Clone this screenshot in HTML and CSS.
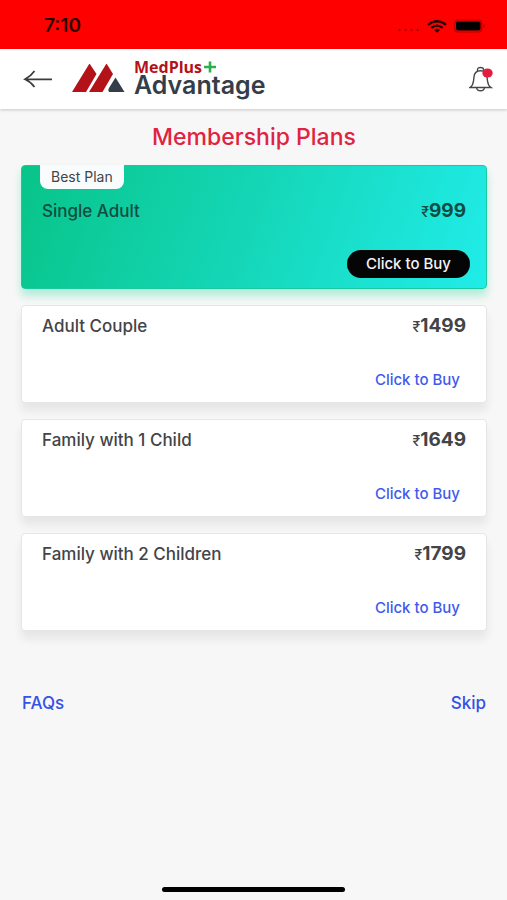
FILE: index.html
```html
<!DOCTYPE html>
<html lang="en">
<head>
<meta charset="utf-8">
<meta name="viewport" content="width=device-width, initial-scale=1">
<title>Membership Plans</title>
<link rel="stylesheet" href="styles.css">
</head>
<body>
<div class="status">
  <time class="clock">7:10</time>
  <div class="indicators">
    <svg class="signal" width="22" height="4" viewBox="0 0 22 4" aria-hidden="true"><g fill="#a80000"><circle cx="1.500" cy="2" r="1.200"/><circle cx="7.500" cy="2" r="1.200"/><circle cx="13.500" cy="2" r="1.200"/><circle cx="19.500" cy="2" r="1.200"/></g></svg>
    <svg width="20" height="13" viewBox="0 0 20 13" aria-hidden="true"><g fill="none" stroke="#250000" stroke-width="2.300"><path d="M1 4.800Q10-2.200 19 4.800"/><path d="M4.300 7.900Q10 3.300 15.700 7.900"/></g><path d="M7 10Q10 7.600 13 10L10 12.700Z" fill="#250000"/></svg>
    <svg width="32" height="14" viewBox="0 0 32 14" aria-hidden="true"><rect x=".700" y="1" width="27" height="12" rx="3.500" fill="none" stroke="#b80000" stroke-width="1.200"/><rect x="2" y="2.500" width="24.500" height="9" rx="1.800" fill="#000"/><path d="M29.500 5Q32 7 29.500 9Z" fill="#a00000"/></svg>
  </div>
</div>
<header class="topbar">
  <button class="icon-button" type="button" aria-label="Back">
    <svg width="30" height="20" viewBox="0 0 30 20" fill="none" stroke="#3c3c3f" stroke-width="1.700"><path d="M29 10.300H2M11.500 2Q8 7 2 10.300Q8 13 11.500 18"/></svg>
  </button>
  <a class="brand" href="#">
    <svg width="53" height="30" viewBox="0 0 53 30" aria-hidden="true"><path d="M0 28L17.500 -.500L24.500 10L14 28Z" fill="#b41219"/><path d="M17 28L34.500 -.500L41 10L30.500 28Z" fill="#b41219"/><path d="M43.500 13.500L52.500 28H37Q35.500 26 37 24Z" fill="#343d48"/></svg>
    <span class="brand-text">
      <span class="brand-top">MedPlus<svg width="12" height="12" viewBox="0 0 12 12" aria-hidden="true"><path d="M6 .500V11.500M0 6H12" stroke="#2bb04a" stroke-width="2.600"/></svg></span>
      <span class="brand-name">Advantage</span>
    </span>
  </a>
  <button class="icon-button bell" type="button" aria-label="Notifications">
    <svg width="24" height="26" viewBox="0 0 24 26"><g fill="none" stroke="#45464a" stroke-width="1.400"><path d="M8.500 5V3.500Q8.500 1.500 11.500 1.500Q14.500 1.500 14.500 3.500V5"/><path d="M1 21.500Q4 19.500 4.500 15L5 11Q5.500 4.800 11.500 4.800Q17.500 4.800 18 11L18.500 15Q19 19.500 22 21.500Z"/><path d="M7.500 21.500Q8 24.800 11.500 24.800Q15 24.800 15.500 21.500"/></g><ellipse cx="18.500" cy="7" rx="5.200" ry="4.600" fill="#e31b3d"/></svg>
  </button>
</header>
<main class="content">
  <h1>Membership Plans</h1>
  <section class="plan best">
    <span class="tag">Best Plan</span>
    <div class="plan-row"><h2>Single Adult</h2><p class="price"><span class="rupee">₹</span>999</p></div>
    <button class="buy" type="button">Click to Buy</button>
  </section>
  <section class="plan">
    <div class="plan-row"><h2>Adult Couple</h2><p class="price"><span class="rupee">₹</span>1499</p></div>
    <button class="buy" type="button">Click to Buy</button>
  </section>
  <section class="plan">
    <div class="plan-row"><h2>Family with 1 Child</h2><p class="price"><span class="rupee">₹</span>1649</p></div>
    <button class="buy" type="button">Click to Buy</button>
  </section>
  <section class="plan">
    <div class="plan-row"><h2>Family with 2 Children</h2><p class="price"><span class="rupee">₹</span>1799</p></div>
    <button class="buy" type="button">Click to Buy</button>
  </section>
  <nav class="links"><a href="#">FAQs</a><a href="#">Skip</a></nav>
</main>
<div class="home-bar"></div>
</body>
</html>
```
FILE: styles.css
```css
* { box-sizing: border-box; }
body {
  margin: 0;
  min-height: 100vh;
  display: flex;
  flex-direction: column;
  background: #f7f7f7;
  color: #434448;
  font-family: Inter, "Liberation Sans", sans-serif;
}
h1, h2, p { margin: 0; }
a { color: inherit; text-decoration: none; }
svg { display: block; flex: none; }
button { font: inherit; color: inherit; border: 0; background: none; padding: 0; cursor: pointer; }
.status {
  display: flex;
  justify-content: space-between;
  align-items: center;
  padding: 14px 21px 11px 44px;
  background: #ff0000;
  color: #300000;
}
.clock { font-size: 19px; line-height: 24px; font-weight: 600; }
.indicators { display: flex; align-items: center; gap: 7px; }
.signal { margin-top: 8px; }
.topbar {
  display: flex;
  align-items: center;
  height: 60px;
  padding: 0 14px 0 23px;
  background: #fff;
  box-shadow: 0 1px 3px rgba(0, 0, 0, .2);
}
.brand { display: flex; align-items: center; gap: 9px; margin-left: 19px; }
.brand-text { display: flex; flex-direction: column; }
.brand-top {
  display: flex;
  align-items: center;
  gap: 2px;
  color: #b41219;
  font: 700 16px/16px "Open Sans", sans-serif;
}
.brand-name { color: #343d48; font: 600 25px/20px Inter, sans-serif; padding-bottom: 4px; }
.bell { margin-left: auto; }
.content { padding: 14px 20px 0 21px; }
h1 {
  color: #e0243f;
  font-size: 23px;
  line-height: 28px;
  font-weight: 500;
  text-align: center;
}
.plan {
  position: relative;
  display: flex;
  flex-direction: column;
  justify-content: space-between;
  align-items: flex-end;
  min-height: 98px;
  margin-top: 16px;
  padding: 8px 16px 8px 20px;
  border: 1px solid #e6e6e6;
  border-radius: 4px;
  background: #fff;
  box-shadow: 0 8px 10px rgba(0, 0, 0, .07);
}
.best {
  min-height: 124px;
  margin-top: 14px;
  padding-top: 33px;
  padding-bottom: 10px;
  border-color: #18ca9c;
  background: linear-gradient(110deg, #08c489, #15d7b8 50%, #20ece9);
  box-shadow: 0 7px 8px rgba(16, 213, 145, .3);
  color: #134c43;
}
.tag {
  position: absolute;
  top: -1px;
  left: 18px;
  padding: 0 11px;
  border-radius: 0 0 8px 8px;
  background: #f9fcfc;
  color: #434448;
  font-size: 14px;
  line-height: 24px;
}
.plan-row {
  display: flex;
  justify-content: space-between;
  align-items: baseline;
  align-self: stretch;
  padding-right: 4px;
}
h2 { font-size: 17px; line-height: 24px; font-weight: 500; }
.price { font-size: 19px; line-height: 24px; font-weight: 700; }
.rupee { font-size: 14px; font-weight: 500; }
.buy {
  padding: 0 10px;
  color: #3f5aec;
  font-size: 15px;
  line-height: 28px;
  font-weight: 500;
}
.best .buy { padding: 0 19px; border-radius: 14px; background: #050505; color: #f3f3f3; }
.links {
  display: flex;
  justify-content: space-between;
  margin-top: 60px;
  padding: 0 1px;
  color: #3551e4;
  font-size: 17px;
  line-height: 24px;
  font-weight: 500;
}
.home-bar {
  width: 36%;
  height: 5px;
  margin: auto auto 8px;
  border-radius: 3px;
  background: #000;
}
```
